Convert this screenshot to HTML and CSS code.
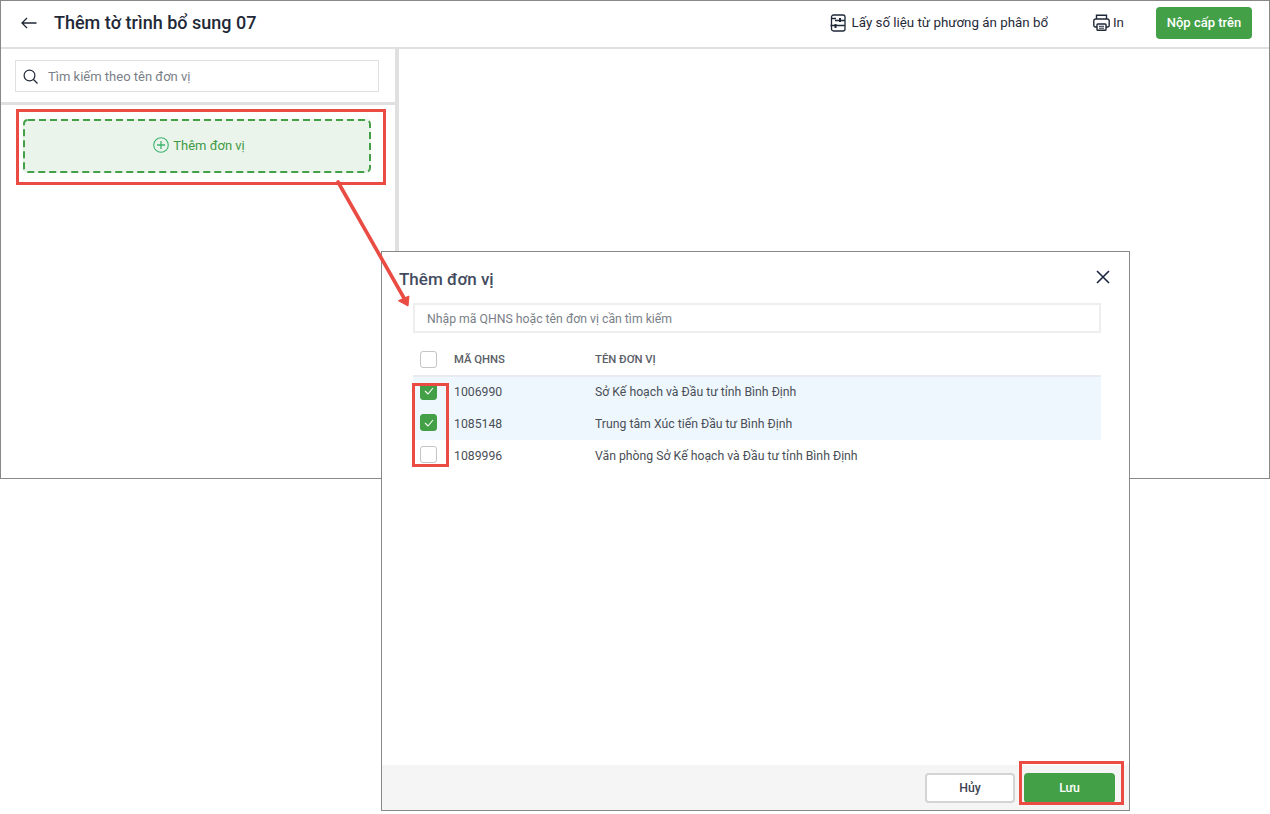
FILE: index.html
```html
<!DOCTYPE html>
<html lang="vi">
<head>
<meta charset="utf-8">
<title>Thêm tờ trình bổ sung 07</title>
<link rel="stylesheet" href="styles.css">
</head>
<body>
<div class="stage">
  <section class="window">
    <header class="topbar">
      <svg class="back" width="16" height="12" viewBox="0 0 16 12"><path d="M15.500 6H1M6 1 1 6l5 5" fill="none" stroke="#1f2937" stroke-width="1.300"/></svg>
      <h1 class="title">Thêm tờ trình bổ sung 07</h1>
      <button class="action action-data">
        <svg width="16" height="18" viewBox="0 0 16 18" fill="none" stroke="#1f2937" stroke-width="1.300"><rect x="1.500" y="1" width="13.500" height="16" rx="2"/><path d="M0.500 11.500H15M5 6.500H15M1.500 4.500H6"/><path d="M10 4V8M5.500 10V14" stroke-width="2"/></svg>
        <span>Lấy số liệu từ phương án phân bổ</span>
      </button>
      <button class="action action-print">
        <svg width="17" height="17" viewBox="0 0 17 17" fill="none" stroke="#1f2937" stroke-width="1.400"><path d="M3.500 5V1.200h10V5"/><path d="M4 13H2.200A1.500 1.500 0 0 1 .8 11.500V7a2 2 0 0 1 2-2h11.400a2 2 0 0 1 2 2v4.500A1.500 1.500 0 0 1 14.800 13H13"/><rect x="4" y="10" width="9" height="6.200" rx=".8"/><path d="M6 12.300h5M6 14.200h5" stroke-width="1"/></svg>
        <span>In</span>
      </button>
      <button class="submit">Nộp cấp trên</button>
    </header>
    <div class="body">
      <aside class="sidebar">
        <div class="search-wrap">
          <label class="search">
            <svg width="15" height="15" viewBox="0 0 15 15" fill="none" stroke="#1f2937" stroke-width="1.200"><circle cx="6.500" cy="6.500" r="5.400"/><path d="m10.500 10.500 4 4"/></svg>
            <span>Tìm kiếm theo tên đơn vị</span>
          </label>
        </div>
        <div class="add-wrap">
          <div class="add-unit">
            <svg class="dash" width="348" height="54" viewBox="0 0 348 54"><rect x="1" y="1" width="346" height="52" rx="4" fill="none" stroke="#43a047" stroke-width="2" stroke-dasharray="7 4"/></svg>
            <svg width="16" height="16" viewBox="0 0 16 16" fill="none" stroke="#3db56f" stroke-width="1.100"><circle cx="8" cy="8" r="7.300"/><path d="M8 4v8M4 8h8" stroke-width="1.300"/></svg>
            <span>Thêm đơn vị</span>
          </div>
        </div>
      </aside>
      <main class="content"></main>
    </div>
  </section>

  <section class="modal">
    <div class="modal-main">
      <div class="modal-head">
        <h2 class="modal-title">Thêm đơn vị</h2>
        <svg class="close" width="14" height="14" viewBox="0 0 14 14"><path d="m1 1 12 12M13 1 1 13" fill="none" stroke="#1b2540" stroke-width="1.600"/></svg>
      </div>
      <div class="modal-input">Nhập mã QHNS hoặc tên đơn vị cần tìm kiếm</div>
      <div class="row row-head">
        <span class="check"></span>
        <span class="code">MÃ QHNS</span>
        <span class="name">TÊN ĐƠN VỊ</span>
      </div>
      <div class="row row-selected">
        <span class="check check-on"><svg width="10" height="8" viewBox="0 0 10 8"><path d="m1 4 3 3 5-6" fill="none" stroke="#fff" stroke-width="1.100"/></svg></span>
        <span class="code">1006990</span>
        <span class="name">Sở Kế hoạch và Đầu tư tỉnh Bình Định</span>
      </div>
      <div class="row row-selected">
        <span class="check check-on"><svg width="10" height="8" viewBox="0 0 10 8"><path d="m1 4 3 3 5-6" fill="none" stroke="#fff" stroke-width="1.100"/></svg></span>
        <span class="code">1085148</span>
        <span class="name">Trung tâm Xúc tiến Đầu tư Bình Định</span>
      </div>
      <div class="row">
        <span class="check"></span>
        <span class="code">1089996</span>
        <span class="name">Văn phòng Sở Kế hoạch và Đầu tư tỉnh Bình Định</span>
      </div>
    </div>
    <footer class="modal-foot">
      <button class="btn btn-cancel">Hủy</button>
      <button class="btn btn-save">Lưu</button>
    </footer>
  </section>

  <div class="mark mark-add"></div>
  <div class="mark mark-checks"></div>
  <div class="mark mark-save"></div>
  <svg class="arrow" width="80" height="135" viewBox="0 0 80 135"><path d="M2 3 68 119" fill="none" stroke="#ea4b42" stroke-width="3.600" stroke-linecap="round"/><path d="M72 127 62.300 121.700 73 117Z" fill="#ea4b42" stroke="#ea4b42"/></svg>
</div>
</body>
</html>
```

FILE: styles.css
```css
* { box-sizing: border-box; }
html, body { margin: 0; padding: 0; background: #fff; }
body { font-family: Roboto, "Liberation Sans", sans-serif; color: #1f2937; }
button { font-family: inherit; }
.stage { position: relative; width: 1270px; height: 814px; overflow: hidden; }

.window { width: 1270px; height: 479px; border: 1px solid #888; display: flex; flex-direction: column; background: #fff; }
.topbar { height: 48px; flex: none; display: flex; align-items: center; padding: 0 17px 2px 20px; border-bottom: 2px solid #e0e0e0; }
.back { flex: none; margin-right: 17px; }
.title { margin: 0 0 2px; flex: 1; font-size: 18px; font-weight: 500; color: #1f2937; }
.action { display: flex; align-items: center; gap: 6px; border: 0; background: none; padding: 0 0 2px; font-size: 13.330px; color: #1f2937; }
.action-data { margin-right: 45px; }
.action-data svg, .action-print svg { margin-top: 1px; }
.action-print { gap: 3px; margin-right: 32px; }
.submit { width: 96px; height: 32px; border: 0; border-radius: 4px; background: #43a047; color: #fff; font-size: 13px; font-weight: 500; padding: 0 0 2px; }

.body { flex: 1; display: flex; min-height: 0; }
.sidebar { width: 398px; flex: none; border-right: 4px solid #e0e0e0; }
.search-wrap { height: 56px; padding: 11px 16px 0 14px; border-bottom: 3px solid #e0e0e0; }
.search { height: 32px; display: flex; align-items: center; gap: 10px; padding-left: 7px; border: 1px solid #e0e0e0; font-size: 13px; color: #7a8088; }
.add-wrap { padding: 14px 24px 0 22px; }
.add-unit { position: relative; height: 54px; display: flex; align-items: center; justify-content: center; gap: 4px; background: #eaf4eb; border-radius: 4px; font-size: 13px; color: #3f9a45; padding: 0 0 2px 4px; }
.dash { position: absolute; left: 0; top: 0; }
.content { flex: 1; }

.modal { position: absolute; left: 381px; top: 251px; width: 749px; height: 560px; border: 1px solid #888; background: #fff; display: flex; flex-direction: column; }
.modal-main { flex: 1; padding: 0 28px 0 31px; }
.modal-head { height: 51px; display: flex; align-items: center; justify-content: space-between; margin: 0 -10px 0 -14px; padding: 0 1px 0 0; }
.modal-title { margin: 2px 0 0; font-size: 17px; font-weight: 500; color: #434c5e; }
.close { flex: none; margin-bottom: 1px; }
.modal-input { height: 30px; border: 2px solid #eeeeee; padding: 1px 0 0 12px; display: flex; align-items: center; font-size: 12.250px; color: #7a8088; }
.row { height: 32px; display: flex; align-items: center; font-size: 12.250px; color: #4a4f57; }
.row-head { height: 44px; padding: 10px 0 0; border-bottom: 2px solid #e8ecf0; font-size: 11.300px; font-weight: 500; color: #5a6068; }
.row-selected { padding-bottom: 2px; background: #eff7fe; }
.row-selected + .row-selected { height: 31px; padding-bottom: 1px; }
.check { flex: none; width: 17px; height: 17px; margin: 0 0 3px 7px; border: 1px solid #c4c4c4; border-radius: 3px; background: #fff; display: flex; align-items: center; justify-content: center; }
.row-head .check { margin-bottom: 0; }
.row-head + .row-selected .check { margin-bottom: 2px; }
.check-on { background: #43a047; border-color: #43a047; }
.code { width: 141px; margin-left: 17px; flex: none; }
.modal-foot { height: 45px; flex: none; background: #f5f5f5; display: flex; justify-content: flex-end; align-items: flex-start; gap: 9px; padding: 8px 14px 0 0; }
.btn { height: 30px; border-radius: 4px; font-size: 12.250px; font-weight: 500; padding: 0 0 1px; }
.btn-cancel { width: 90px; background: #fff; border: 2px solid #d4d4d4; color: #3b4250; }
.btn-save { width: 91px; background: #43a047; border: 0; color: #fff; }

.mark { position: absolute; border: 3px solid #ea4b42; }
.mark-add { left: 16px; top: 109px; width: 370px; height: 76px; }
.mark-checks { left: 412px; top: 383px; width: 37px; height: 84px; }
.mark-save { left: 1019px; top: 761px; width: 105px; height: 44px; }
.arrow { position: absolute; left: 336px; top: 179px; overflow: visible; }
```
